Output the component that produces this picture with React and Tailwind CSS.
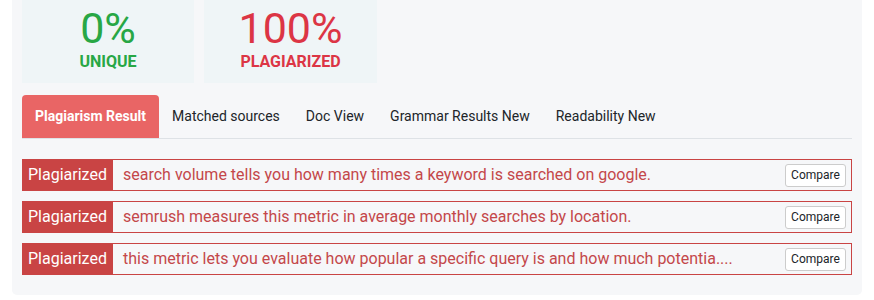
import React from 'react';

const rows = [
  'search volume tells you how many times a keyword is searched on google.',
  'semrush measures this metric in average monthly searches by location.',
  'this metric lets you evaluate how popular a specific query is and how much potentia....',
];

const tabs = ['Matched sources', 'Doc View', 'Grammar Results New', 'Readability New'];

const App = () => {
  return (
    <div className="bg-white w-[874px] h-[300px] overflow-hidden font-['Roboto',sans-serif]">
      <div className="mx-[12px] w-[850px] h-[295px] bg-[#f6f7f9] rounded-b-[5px] px-[10px]">
        <div className="flex gap-[10px]">
          <div className="w-[172px] h-[83px] bg-[#eff5f7] flex flex-col items-center pt-[2px]">
            <div className="text-[43px] leading-[52px] text-[#28a745]">0%</div>
            <div className="text-[16px] leading-[18px] font-bold text-[#28a745] -mt-[1px]">UNIQUE</div>
          </div>
          <div className="w-[173px] h-[83px] bg-[#eff5f7] flex flex-col items-center pt-[2px]">
            <div className="text-[43px] leading-[52px] text-[#dc3545]">100%</div>
            <div className="text-[16px] leading-[18px] font-bold text-[#dc3545] -mt-[1px]">PLAGIARIZED</div>
          </div>
        </div>

        <div className="mt-[12px] flex border-b border-[#dee2e6] w-[830px]">
          <div className="h-[43px] px-[13px] flex items-center bg-[#e96565] text-white text-[14px] font-bold rounded-t-[4px]">
            Plagiarism Result
          </div>
          {tabs.map((t) => (
            <div key={t} className="h-[43px] px-[13px] flex items-center text-[14px] text-[#212529]">
              {t}
            </div>
          ))}
        </div>

        <div className="mt-[20px] flex flex-col gap-[10px] w-[830px]">
          {rows.map((r, i) => (
            <div key={i} className="h-[32px] flex items-center border border-[#c94444] bg-[#f6f7f9]">
              <div className="h-full w-[90px] bg-[#c94444] text-white text-[16px] flex items-center pl-[5px] shrink-0">
                Plagiarized
              </div>
              <div className="flex-1 pl-[10px] text-[16px] text-[#c4474a] whitespace-nowrap overflow-hidden">
                {r}
              </div>
              <button className="mr-[5px] h-[23px] w-[61px] bg-white border border-[#cccccc] rounded-[3px] text-[12px] text-[#212529]">
                Compare
              </button>
            </div>
          ))}
        </div>
      </div>
    </div>
  );
};

export default App;
